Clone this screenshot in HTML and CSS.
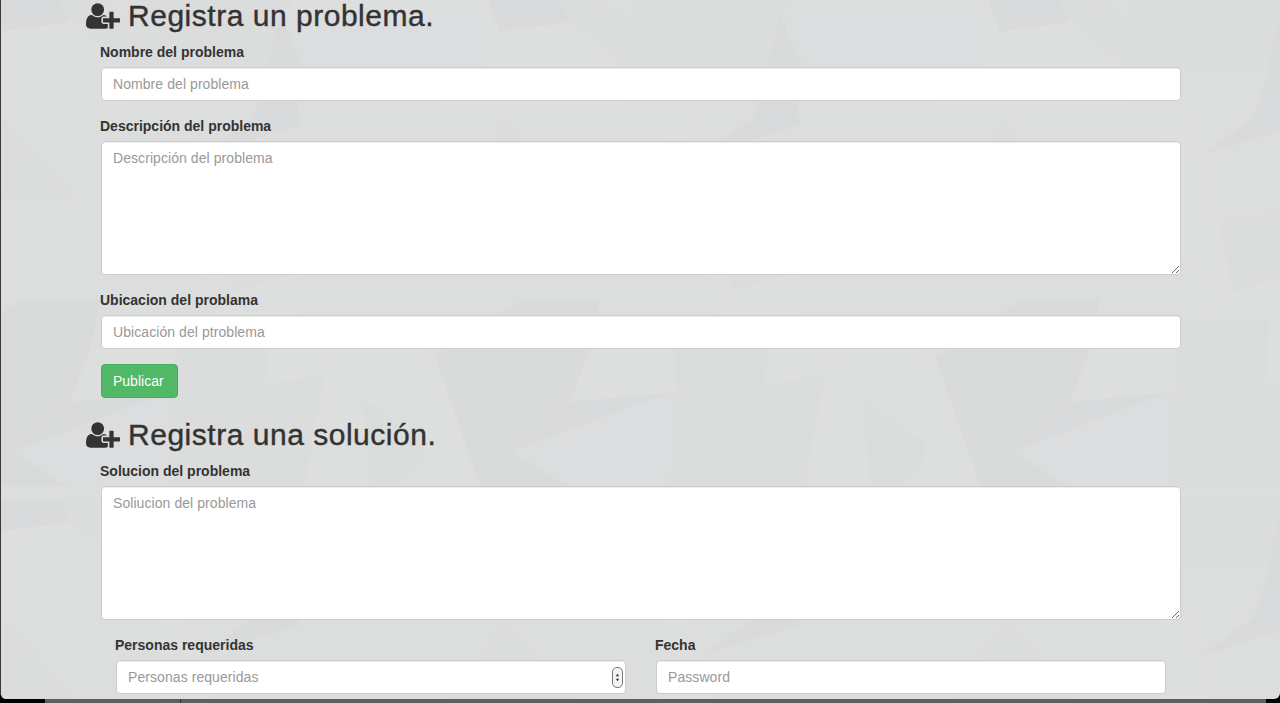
FILE: index.html
```html
<!DOCTYPE html>
<html lang="en">
<head>
  <meta charset="UTF-8">
  <title>Registra un problema</title>
  <meta name="viewport" content="width=device-width, initial-scale=1.0">
  <link rel="stylesheet" href="styles.css">
</head>
<body>
  <div class="window">
    <!-- faint polygon wallpaper, a 500px tile -->
    <svg class="wallpaper" aria-hidden="true">
      <defs>
        <g id="shapes">
          <polygon class="d1" points="488,0 499,32 571,22 560,0"/>
          <polygon class="l1" points="440,0 488,0 499,32 571,22 625,68 625,110 440,110"/>
          <polygon class="l2" points="595,0 630,18 635,0"/>
          <polygon class="m1" points="571,22 625,68 767,68 780,15 795,0 635,0 630,18 595,0 560,0"/>
          <polygon class="d2" points="780,15 767,68 804,68"/>
          <polygon class="l2" points="780,15 804,68 985,68 985,0 795,0"/>
          <polygon class="l1" points="795,0 985,0 990,16 785,16"/>
          <polygon class="d1" points="702,155 753,118 785,20 800,125"/>
          <polygon class="l1" points="660,105 688,120 702,155 733,292 660,250"/>
          <polygon class="m1" points="720,220 800,210 800,270 733,292"/>
          <polygon class="l1" points="733,292 800,270 800,349 680,349"/>
          <polygon class="l1" points="640,320 671,320 676,392 640,396"/>
          <polygon class="m1" points="671,320 676,392 650,486 805,486 825,373 765,386 770,320"/>
          <polygon class="l1" points="770,320 850,320 825,373 765,386"/>
          <polygon class="l1" points="825,373 850,320 935,357 980,486 805,486"/>
          <polygon class="l3" points="862,398 925,442 925,460 900,486 870,486"/>
          <polygon class="d2" points="435,357 520,300 600,300 590,349 570,402 513,452 568,486 480,486"/>
          <polygon class="l1" points="590,349 675,345 675,392 570,402"/>
          <polygon class="d1" points="570,402 675,392 640,403 513,452"/>
          <polygon class="l2" points="513,452 640,403 675,392 670,486 568,486"/>
          <polygon class="m1" points="505,120 575,199 450,199"/>
          <polygon class="d1" points="190,0 240,0 225,40 200,60"/>
        </g>
        <pattern id="tile" width="500" height="500" patternUnits="userSpaceOnUse">
          <use href="#shapes"/>
          <use href="#shapes" x="-500"/>
          <use href="#shapes" y="-500"/>
          <use href="#shapes" x="-500" y="-500"/>
        </pattern>
      </defs>
      <rect width="100%" height="100%" fill="url(#tile)"/>
    </svg>

    <div class="content">
      <h2 class="title first">
        <svg class="user-plus" viewBox="0 0 2048 1792" aria-hidden="true"><path d="M704 896q-159 0-271.500-112.500t-112.500-271.500 112.500-271.500 271.500-112.500 271.500 112.500 112.500 271.500-112.500 271.500-271.500 112.500zm960 128h352q13 0 22.500 9.500t9.500 22.500v192q0 13-9.500 22.500t-22.500 9.500h-352v352q0 13-9.500 22.500t-22.500 9.500h-192q-13 0-22.500-9.500t-9.500-22.500v-352h-352q-13 0-22.500-9.500t-9.500-22.500v-192q0-13 9.500-22.500t22.500-9.500h352v-352q0-13 9.500-22.500t22.500-9.500h192q13 0 22.500 9.500t9.500 22.500v352zm-736 224q0 52 38 90t90 38h256v238q-68 50-171 50h-874q-121 0-194-69t-73-190q0-53 3.500-103.500t14-109 26.500-108.500 43-97.500 62-81 85.500-53.500 111.500-20q19 0 39 17 79 61 154.500 91.500t164.500 30.500 164.500-30.500 154.500-91.500q20-17 39-17 132 0 217 96h-223q-52 0-90 38t-38 90v192z"/></svg>
        Registra un problema.
      </h2>
      <form class="form">
        <div class="form-group">
          <label>Nombre del problema</label>
          <input class="form-control" type="text" placeholder="Nombre del problema">
        </div>
        <div class="form-group">
          <label>Descripción del problema</label>
          <textarea class="form-control" placeholder="Descripción del problema"></textarea>
        </div>
        <div class="form-group">
          <label>Ubicacion del problama</label>
          <input class="form-control" type="text" placeholder="Ubicación del ptroblema">
        </div>
        <button class="btn" type="button">Publicar</button>
      </form>

      <h2 class="title">
        <svg class="user-plus" viewBox="0 0 2048 1792" aria-hidden="true"><path d="M704 896q-159 0-271.500-112.500t-112.500-271.500 112.500-271.500 271.500-112.500 271.500 112.500 112.500 271.500-112.500 271.500-271.500 112.500zm960 128h352q13 0 22.500 9.500t9.500 22.500v192q0 13-9.500 22.500t-22.500 9.500h-352v352q0 13-9.500 22.500t-22.500 9.500h-192q-13 0-22.500-9.500t-9.500-22.500v-352h-352q-13 0-22.500-9.500t-9.500-22.500v-192q0-13 9.500-22.500t22.500-9.500h352v-352q0-13 9.500-22.500t22.500-9.500h192q13 0 22.500 9.500t9.500 22.500v352zm-736 224q0 52 38 90t90 38h256v238q-68 50-171 50h-874q-121 0-194-69t-73-190q0-53 3.500-103.500t14-109 26.500-108.500 43-97.500 62-81 85.500-53.500 111.500-20q19 0 39 17 79 61 154.500 91.500t164.500 30.500 164.500-30.500 154.500-91.500q20-17 39-17 132 0 217 96h-223q-52 0-90 38t-38 90v192z"/></svg>
        Registra una solución.
      </h2>
      <form class="form">
        <div class="form-group">
          <label>Solucion del problema</label>
          <textarea class="form-control" placeholder="Soliucion del problema"></textarea>
        </div>
        <div class="row">
          <div class="form-group">
            <label>Personas requeridas</label>
            <div class="number-wrap">
              <input class="form-control" type="text" placeholder="Personas requeridas">
              <span class="spinner">
                <svg viewBox="0 0 6 14" aria-hidden="true"><path d="M3 2.500 5 5.500H1zM3 11.500 1 8.500h4z"/></svg>
              </span>
            </div>
          </div>
          <div class="form-group">
            <label>Fecha</label>
            <input class="form-control" type="text" placeholder="Password">
          </div>
        </div>
      </form>
    </div>
  </div>

  <!-- desktop peeking out under the window -->
  <div class="dock">
    <div class="dock-black"></div>
    <div class="dock-grey"></div>
    <div class="dock-grey wide"></div>
    <div class="dock-black end"></div>
  </div>
</body>
</html>
```

FILE: styles.css
```css
* {
  box-sizing: border-box;
}

html, body {
  height: 100%;
}

body {
  margin: 0;
  overflow: hidden;
  background: #000;
  font-family: "Liberation Sans", Arial, sans-serif;
  font-size: 14px;
  line-height: 20px;
  color: #333;
}

/* Browser window, cut off at the bottom of the screen */
.window {
  position: relative;
  height: 699px;
  overflow: hidden;
  background: #dcdddd;
  border-left: 1px solid #3a3a3a;
  border-radius: 0 0 6px 6px;
}

.wallpaper {
  position: absolute;
  top: 0;
  left: -1px;
  width: 1281px;
  height: 100%;
}

.wallpaper .d1 { fill: #d9dadb; }
.wallpaper .d2 { fill: #d9dada; }
.wallpaper .m1 { fill: #dbdcdc; }
.wallpaper .l1 { fill: #dddede; }
.wallpaper .l2 { fill: #dcddde; }
.wallpaper .l3 { fill: #dbdcdc; }

.content {
  position: relative;
  padding: 0 99px 0 84px;
}

.title {
  display: flex;
  align-items: center;
  gap: 8px;
  margin: 20px 0 10px;
  font-size: 30px;
  font-weight: 500;
  line-height: 33px;
  letter-spacing: 0.52px;
  -webkit-text-stroke: 0.4px #333;
  color: #333;
}

.title.first {
  margin-top: -1px;
}

.user-plus {
  width: 34px;
  height: 30px;
  margin-left: 1px;
  fill: #333;
}

.form {
  padding-left: 15px;
}

.form-group {
  margin-bottom: 15px;
}

label {
  display: block;
  margin-bottom: 5px;
  font-weight: bold;
}

.form-control {
  display: block;
  width: calc(100% - 1px);
  height: 34px;
  margin-left: 1px;
  padding: 6px 11px;
  font-family: inherit;
  font-size: 14px;
  line-height: 20px;
  color: #555;
  background: #fff;
  border: 1px solid #ccc;
  border-radius: 4px;
  box-shadow: inset 0 1px 1px rgba(0, 0, 0, 0.075);
}

textarea.form-control {
  height: 134px;
}

.form-control::placeholder {
  color: #999;
  letter-spacing: 0.07px;
  opacity: 1;
}

.btn {
  display: block;
  width: 77px;
  height: 34px;
  margin-left: 1px;
  padding: 6px 11px;
  font-family: inherit;
  font-size: 14px;
  line-height: 20px;
  text-align: left;
  color: #fff;
  background: #50b866;
  border: 1px solid #47ab5c;
  border-radius: 4px;
}

.row {
  display: flex;
  gap: 29px;
  padding: 0 15px;
}

.row .form-group {
  width: 511px;
}

.number-wrap {
  position: relative;
}

/* number input stepper */
.spinner {
  position: absolute;
  top: 7px;
  left: 497px;
  display: flex;
  width: 11px;
  height: 21px;
  padding: 3px 2px;
  background: #f4f4f4;
  border: 1px solid #777;
  border-radius: 5px;
}

.spinner svg {
  width: 100%;
  height: 100%;
  fill: #333;
}

.dock {
  display: flex;
  height: 4px;
}

.dock-black {
  width: 45px;
  background: #000;
}

.dock-black.end {
  width: 14px;
}

.dock-grey {
  width: 136px;
  background: #5f5f5f;
  border-right: 1px solid #333;
}

.dock-grey.wide {
  flex: 1;
  border-right: 0;
}
```
